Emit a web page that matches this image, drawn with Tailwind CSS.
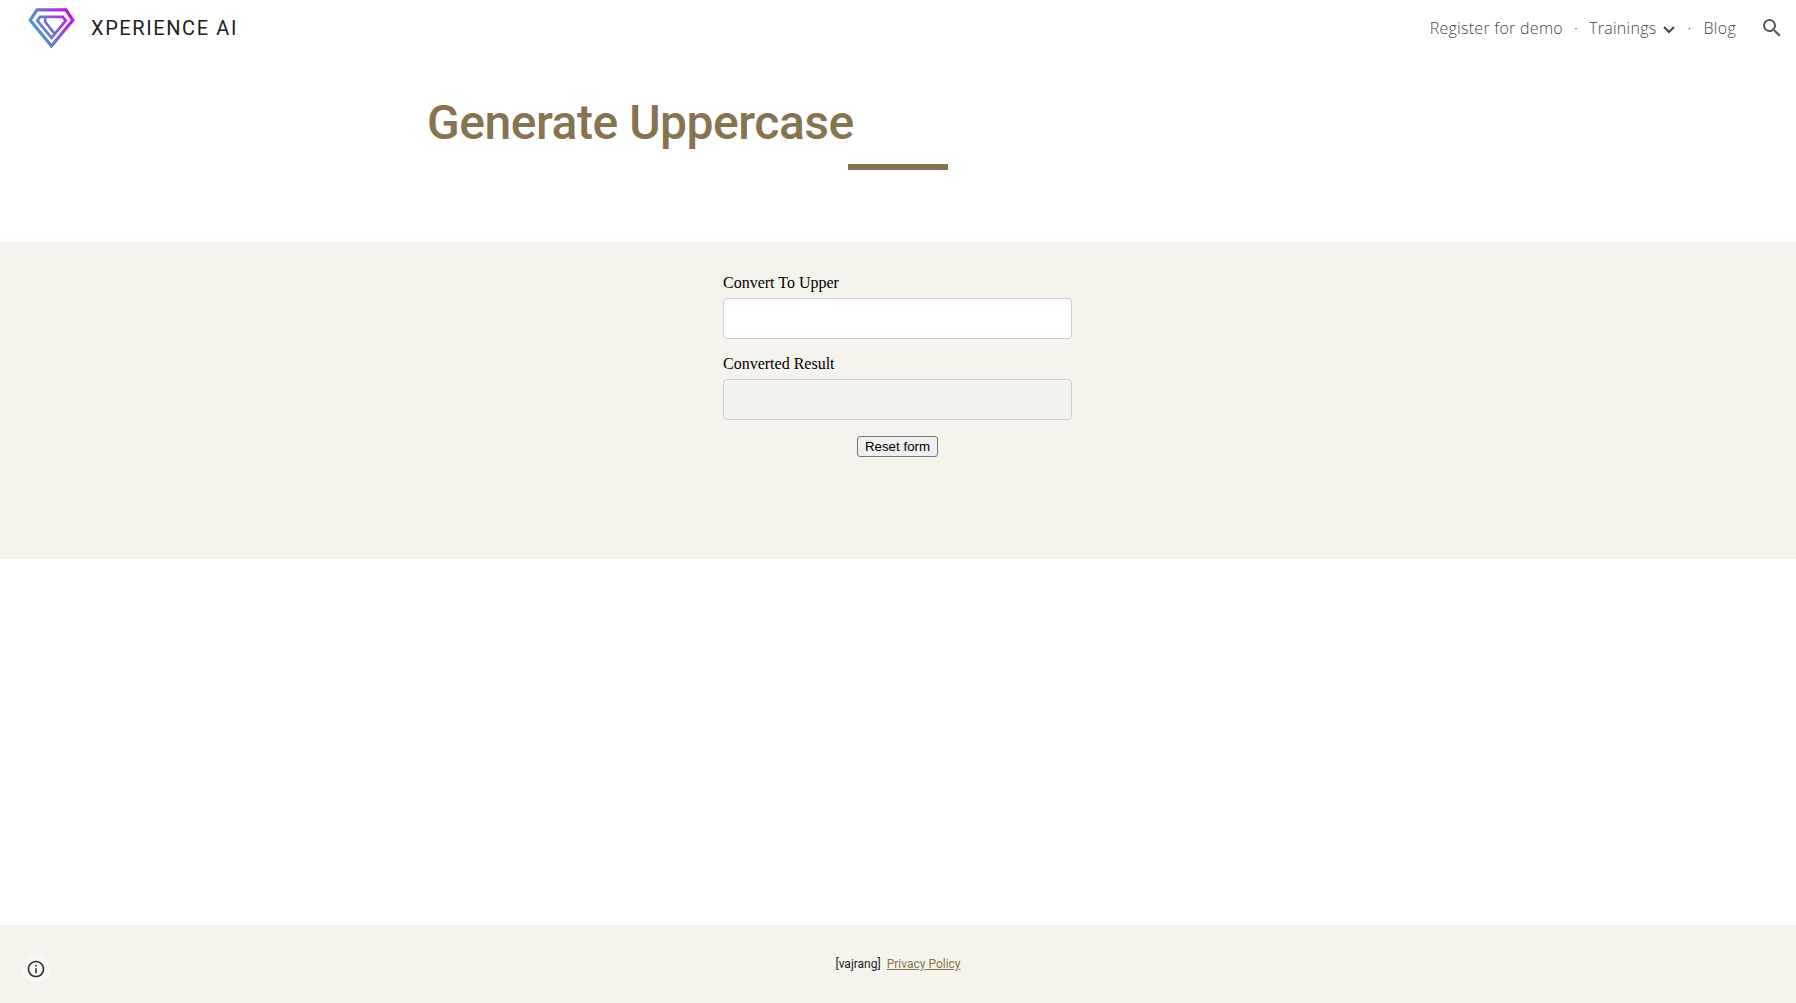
<!DOCTYPE html>
<html lang="en">
<head>
<meta charset="utf-8">
<title>Generate Uppercase</title>
<script src="https://cdn.jsdelivr.net/npm/@tailwindcss/browser@4"></script>
</head>
<body class="h-[1003px] overflow-hidden bg-white flex flex-col font-['Roboto',sans-serif]">
<header class="h-14 shrink-0 flex items-center justify-between pl-7 pr-3">
  <div class="flex items-center gap-4">
    <svg class="w-[47px] h-10" viewBox="0 0 47 40" fill="none" stroke="url(#gem)" stroke-width="3.2">
      <defs><linearGradient id="gem" gradientUnits="userSpaceOnUse" x1="5" y1="30" x2="43" y2="10"><stop stop-color="#36a6d2"/><stop offset=".5" stop-color="#7a68d2"/><stop offset="1" stop-color="#c612e5"/></linearGradient></defs>
      <path d="M9 1.8h29l6.8 10.4L23.5 38 2.2 12.2z"/>
      <path d="M12 8.9h22.8l2.9 3.8-14.2 17.1L9.3 12.7z" stroke-width="2.7"/>
      <path d="M17.2 9.5v4.3l8.9 11.3" stroke-width="2.6"/>
    </svg>
    <div class="text-xl tracking-[1.6px] text-[#212121] leading-7">XPERIENCE AI</div>
  </div>
  <nav class="flex items-center font-['Open_Sans',sans-serif] font-light text-base tracking-[0.28px] text-[#444]">
    <a>Register for demo</a>
    <span class="w-[26px] text-center">·</span>
    <a class="flex items-center">Trainings
      <svg class="ml-[5px] mt-1 w-3.5 h-3.5" viewBox="0 0 14 14" fill="none" stroke="#444" stroke-width="2"><path d="M2 4l5 5 5-5"/></svg>
    </a>
    <span class="w-7 text-center">·</span>
    <a>Blog</a>
    <svg class="ml-6 w-6 h-6" viewBox="0 0 24 24" fill="#555"><path d="M15.5 14h-.79l-.28-.27A6.471 6.471 0 0 0 16 9.5 6.5 6.5 0 1 0 9.5 16c1.61 0 3.09-.59 4.23-1.57l.27.28v.79l5 4.99L20.49 19l-4.99-5zm-6 0C7.01 14 5 11.99 5 9.5S7.01 5 9.5 5 14 7.01 14 9.5 11.99 14 9.5 14z"/></svg>
  </nav>
</header>
<main class="flex-1 flex flex-col">
  <section class="h-[186px] shrink-0 pt-[37px]">
    <div class="w-[944px] mx-auto">
      <h1 class="text-[48px] leading-[60px] font-medium tracking-[-0.48px] text-[#86734f] pl-px">Generate Uppercase</h1>
      <div class="mt-[11px] mx-auto w-[100px] h-1.5 bg-[#86734f]"></div>
    </div>
  </section>
  <section class="h-[317px] shrink-0 bg-[#f6f3ec] pt-[31px]">
    <form class="w-[350px] pr-px mx-auto flex flex-col font-['Liberation_Serif',serif] text-base text-black">
      <label class="leading-[19px] mb-1.5">Convert To Upper</label>
      <input class="h-[41px] bg-white border border-[#ccc] rounded-[4px]">
      <label class="leading-[19px] mt-[15px] mb-1.5">Converted Result</label>
      <input disabled class="h-[41px] bg-[#f2f2ee] border border-[#ccc] rounded-[4px]">
      <button type="reset" class="self-center mt-4 w-[81px] h-[21px] border border-[#767676] rounded-[3px] bg-[#efefef] font-['Liberation_Sans',sans-serif] text-[13.333px] leading-[19px] whitespace-nowrap">Reset form</button>
    </form>
  </section>
</main>
<footer class="relative h-[78px] shrink-0 bg-[#f6f3ec] pt-[29px] flex items-start justify-center text-xs leading-5 text-[#212121]">
  <span>[vajrang]</span><a class="ml-1.5 underline text-[#86734f]">Privacy Policy</a>
  <div class="absolute left-[22px] top-[30px] w-7 h-7 rounded-full bg-[#faf8f4] flex items-center justify-center">
    <svg class="w-5 h-5" viewBox="0 0 24 24" fill="#333"><path d="M11 17h2v-6h-2v6zm1-15C6.48 2 2 6.48 2 12s4.48 10 10 10 10-4.48 10-10S17.52 2 12 2zm0 18c-4.41 0-8-3.59-8-8s3.59-8 8-8 8 3.590 8 8-3.590 8-8 8zM11 9h2V7h-2v2z"/></svg>
  </div>
</footer>
</body>
</html>
